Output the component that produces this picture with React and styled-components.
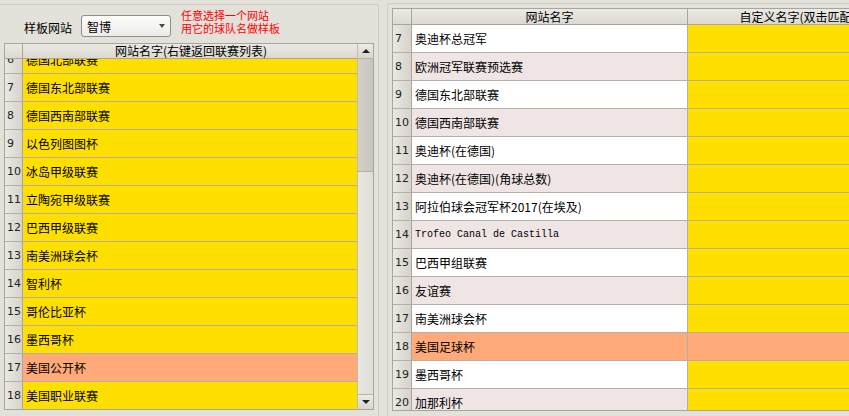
import styled, { createGlobalStyle } from "styled-components";

const GlobalStyle = createGlobalStyle`
  html, body {
    margin: 0;
    padding: 0;
    background: #e2e1da;
    overflow: hidden;
  }
  body {
    font-family: "Noto Sans CJK SC", "Liberation Sans", sans-serif;
    font-size: 12px;
    color: #000;
  }
`;

const leftRows = [
  { n: 6, name: "德国北部联赛" },
  { n: 7, name: "德国东北部联赛" },
  { n: 8, name: "德国西南部联赛" },
  { n: 9, name: "以色列图图杯" },
  { n: 10, name: "冰岛甲级联赛" },
  { n: 11, name: "立陶宛甲级联赛" },
  { n: 12, name: "巴西甲级联赛" },
  { n: 13, name: "南美洲球会杯" },
  { n: 14, name: "智利杯" },
  { n: 15, name: "哥伦比亚杯" },
  { n: 16, name: "墨西哥杯" },
  { n: 17, name: "美国公开杯", hot: true },
  { n: 18, name: "美国职业联赛" },
];

const rightRows = [
  { n: 7, name: "奥迪杯总冠军" },
  { n: 8, name: "欧洲冠军联赛预选赛" },
  { n: 9, name: "德国东北部联赛" },
  { n: 10, name: "德国西南部联赛" },
  { n: 11, name: "奥迪杯(在德国)" },
  { n: 12, name: "奥迪杯(在德国)(角球总数)" },
  { n: 13, name: "阿拉伯球会冠军杯2017(在埃及)" },
  { n: 14, name: "Trofeo Canal de Castilla", latin: true },
  { n: 15, name: "巴西甲组联赛" },
  { n: 16, name: "友谊赛" },
  { n: 17, name: "南美洲球会杯" },
  { n: 18, name: "美国足球杯", hot: true },
  { n: 19, name: "墨西哥杯" },
  { n: 20, name: "加那利杯" },
];

const Page = styled.div`
  display: flex;
  height: 416px;
  width: 849px;
  overflow: hidden;
`;

const LeftBox = styled.div`
  width: 379px;
  flex: none;
  margin-top: 4px;
  border-top: 1px solid #cfcdc5;
  border-right: 1px solid #cfcdc5;
  border-top-right-radius: 3px;
  box-sizing: border-box;
  display: flex;
  flex-direction: column;
`;

const Toolbar = styled.div`
  display: flex;
  align-items: flex-start;
  height: 38px;
  padding-left: 24px;
`;

const Label = styled.span`
  margin-top: 16px;
  font-size: 12px;
  line-height: 14px;
  width: 57px;
`;

const Combo = styled.div`
  margin-top: 10px;
  width: 90px;
  height: 22px;
  box-sizing: border-box;
  border: 1px solid #8f8f8c;
  border-radius: 3px;
  background: linear-gradient(#fdfdfc, #ecebe7);
  display: flex;
  align-items: center;
  justify-content: space-between;
  padding: 0 3px 0 5px;
  font-size: 12px;
`;

const ComboArrow = styled.span`
  width: 0;
  height: 0;
  border-left: 3.5px solid transparent;
  border-right: 3.5px solid transparent;
  border-top: 4px solid #4a4a4a;
  margin-right: 2px;
`;

const Hint = styled.div`
  margin-left: 10px;
  margin-top: 4px;
  color: #ff0000;
  font-size: 11px;
`;

const HintLine = styled.div`
  height: 13px;
  line-height: 13px;
  white-space: nowrap;
`;

const Table = styled.div`
  display: flex;
  flex-direction: column;
  box-sizing: border-box;
  border: 1px solid #a9a59d;
  background: #e2e1da;
  overflow: hidden;
  flex: none;
  width: ${(p) => p.$width}px;
  height: ${(p) => p.$height}px;
`;

const TableWrap = styled.div`
  display: flex;
  flex: none;
  box-sizing: border-box;
  border: 1px solid #a9a59d;
  margin-left: 4px;
  width: 370px;
  height: 367px;
  overflow: hidden;
`;

const TableMain = styled.div`
  flex: 1;
  display: flex;
  flex-direction: column;
  overflow: hidden;
`;

const HeaderRow = styled.div`
  display: flex;
  flex: none;
  height: ${(p) => p.$h}px;
  background: linear-gradient(#ebe9e4, #dcd9d2);
  border-bottom: 1px solid #a9a59d;
`;

const HeaderCell = styled.div`
  flex: none;
  width: ${(p) => p.$w}px;
  box-sizing: border-box;
  border-right: 1px solid #a9a59d;
  text-align: center;
  line-height: ${(p) => p.$h}px;
  font-size: 12px;
  white-space: nowrap;
  &:last-child {
    border-right: none;
  }
`;

const Body = styled.div`
  flex: 1;
  overflow: hidden;
`;

const Rows = styled.div`
  margin-top: ${(p) => p.$offset || 0}px;
`;

const Row = styled.div`
  display: flex;
  height: 28px;
  box-sizing: border-box;
  border-bottom: 1px solid #b5b0a6;
`;

const NumCell = styled.div`
  flex: none;
  width: ${(p) => p.$w}px;
  box-sizing: border-box;
  border-right: 1px solid #a9a59d;
  background: linear-gradient(to right, #eae8e3, #d6d3cc);
  display: flex;
  align-items: center;
  padding-left: 2px;
  font-family: "DejaVu Sans", "Liberation Sans", sans-serif;
  font-size: 11px;
  color: #222;
`;

const cellBg = { yellow: "#ffdf00", hot: "#ffaa78", white: "#ffffff", pink: "#efe5e5" };

const Cell = styled.div`
  flex: none;
  width: ${(p) => p.$w}px;
  box-sizing: border-box;
  border-right: 1px solid #b5b0a6;
  background: ${(p) => cellBg[p.$tone]};
  display: flex;
  align-items: center;
  padding-left: ${(p) => p.$pad}px;
  white-space: nowrap;
  overflow: hidden;
  font-size: ${(p) => (p.$latin ? 10 : 12)}px;
  font-family: ${(p) =>
    p.$latin
      ? '"Liberation Mono", monospace'
      : '"Noto Sans CJK SC", "Liberation Sans", sans-serif'};
`;

const ScrollBar = styled.div`
  flex: none;
  width: 15px;
  display: flex;
  flex-direction: column;
  border-left: 1px solid #c0bcb4;
  background: #e6e4de;
`;

const ScrollBtn = styled.div`
  flex: none;
  height: 14px;
  background: linear-gradient(#ecebe6, #d8d5ce);
  border-bottom: 1px solid #b8b4ab;
  display: flex;
  align-items: center;
  justify-content: center;
  &:last-child {
    border-bottom: none;
    border-top: 1px solid #b8b4ab;
  }
`;

const Tri = styled.span`
  width: 0;
  height: 0;
  border-left: 4px solid transparent;
  border-right: 4px solid transparent;
  ${(p) =>
    p.$up ? "border-bottom: 4px solid #222;" : "border-top: 4px solid #222;"}
`;

const Thumb = styled.div`
  flex: none;
  height: 112px;
  background: linear-gradient(to right, #d4d1ca, #c8c5be);
  border-bottom: 1px solid #b3afa6;
`;

const Track = styled.div`
  flex: 1;
  background: linear-gradient(to right, #e9e7e2, #dedcd5);
`;

const RightBox = styled.div`
  flex: none;
  margin-left: 8px;
  margin-top: 3px;
  border-top: 1px solid #cfcdc5;
  border-left: 1px solid #cfcdc5;
  border-top-left-radius: 3px;
  padding: 4px 0 0 4px;
  box-sizing: border-box;
  width: 470px;
`;

export default function App() {
  return (
    <>
      <GlobalStyle />
      <Page>
        <LeftBox>
          <Toolbar>
            <Label>样板网站</Label>
            <Combo>
              <span>智博</span>
              <ComboArrow />
            </Combo>
            <Hint>
              <HintLine>任意选择一个网站</HintLine>
              <HintLine>用它的球队名做样板</HintLine>
            </Hint>
          </Toolbar>
          <TableWrap>
            <TableMain>
              <HeaderRow $h={14}>
                <HeaderCell $w={18} $h={14} />
                <HeaderCell $w={336} $h={14}>
                  网站名字(右键返回联赛列表)
                </HeaderCell>
              </HeaderRow>
              <Body>
                <Rows $offset={-13}>
                  {leftRows.map((r) => (
                    <Row key={r.n}>
                      <NumCell $w={18}>{r.n}</NumCell>
                      <Cell $w={336} $pad={3} $tone={r.hot ? "hot" : "yellow"}>
                        {r.name}
                      </Cell>
                    </Row>
                  ))}
                </Rows>
              </Body>
            </TableMain>
            <ScrollBar>
              <ScrollBtn>
                <Tri $up />
              </ScrollBtn>
              <Thumb />
              <Track />
              <ScrollBtn>
                <Tri />
              </ScrollBtn>
            </ScrollBar>
          </TableWrap>
        </LeftBox>
        <RightBox>
          <Table $width={540} $height={403}>
            <HeaderRow $h={15}>
              <HeaderCell $w={19} $h={15} />
              <HeaderCell $w={276} $h={15}>
                网站名字
              </HeaderCell>
              <HeaderCell $w={243} $h={15}>
                自定义名字(双击匹配球队)
              </HeaderCell>
            </HeaderRow>
            <Body>
              <Rows>
                {rightRows.map((r, i) => (
                  <Row key={r.n}>
                    <NumCell $w={19}>{r.n}</NumCell>
                    <Cell
                      $w={276}
                      $pad={3}
                      $latin={r.latin}
                      $tone={r.hot ? "hot" : i % 2 === 0 ? "white" : "pink"}
                    >
                      {r.name}
                    </Cell>
                    <Cell $w={243} $pad={3} $tone={r.hot ? "hot" : "yellow"} />
                  </Row>
                ))}
              </Rows>
            </Body>
          </Table>
        </RightBox>
      </Page>
    </>
  );
}
